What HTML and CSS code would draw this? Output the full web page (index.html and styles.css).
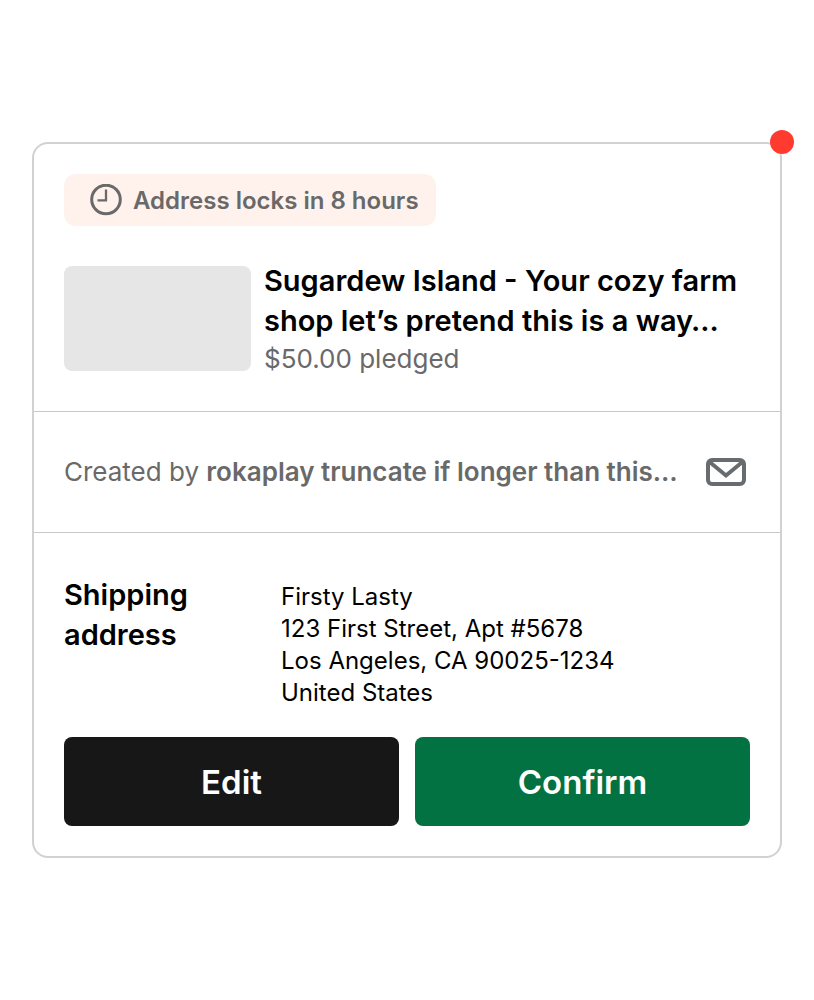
FILE: index.html
```html
<!DOCTYPE html>
<html lang="en">
<head>
<meta charset="utf-8">
<meta name="viewport" content="width=device-width, initial-scale=1">
<title>Pledge card</title>
<link rel="stylesheet" href="styles.css">
</head>
<body>
<main class="page">
  <article class="card">
    <span class="dot"></span>
    <section class="pledge">
      <div class="lock">
        <svg class="clock" viewBox="0 0 32 32" aria-hidden="true"><circle cx="16" cy="15.5" r="14.3"/><path class="hands" d="M16 5.5v10.8H7.5"/></svg>
        <span>Address locks in 8 hours</span>
      </div>
      <div class="project">
        <div class="thumb"></div>
        <div class="info">
          <h1 class="title">Sugardew Island - Your cozy farm shop let’s pretend this is a way…</h1>
          <p class="amount">$50.00 pledged</p>
        </div>
      </div>
    </section>
    <section class="creator">
      <p class="by">Created by <strong>rokaplay truncate if longer than this…</strong></p>
      <button class="mail" type="button" aria-label="Message creator">
        <svg class="envelope" viewBox="0 0 40 28" aria-hidden="true"><rect x="2" y="2" width="36" height="24" rx="4"/><path d="M3 3.5l17 14 17-14"/></svg>
      </button>
    </section>
    <section class="shipping">
      <div class="details">
        <h2 class="heading">Shipping address</h2>
        <address class="address">Firsty Lasty<br>123 First Street, Apt #5678<br>Los Angeles, CA 90025-1234<br>United States</address>
      </div>
      <div class="actions">
        <button class="button" type="button">Edit</button>
        <button class="button confirm" type="button">Confirm</button>
      </div>
    </section>
  </article>
</main>
</body>
</html>
```
FILE: styles.css
```css
* { box-sizing: border-box; }
body { margin: 0; background: #fff; color: #000; font-family: Inter, "Liberation Sans", sans-serif; }
h1, h2, p { margin: 0; }
.page { min-height: 100vh; display: flex; align-items: center; padding: 32px; }
.card { position: relative; flex: 1; min-width: 0; border: 2px solid #d1d1d1; border-radius: 16px; }
.dot { position: absolute; top: -14px; right: -14px; width: 24px; height: 24px; border-radius: 50%; background: #ff3b30; }
.pledge { padding: 30px 30px 40px; }
.lock { display: flex; width: fit-content; align-items: center; gap: 11px; height: 52px; padding: 0 17px 0 26px; border-radius: 12px; background: #fff2ec; color: #696969; font-size: 24px; font-weight: 600; white-space: nowrap; }
.clock { width: 32px; height: 32px; fill: none; stroke: #696969; stroke-width: 3; }
.hands { stroke-width: 2.3; }
.project { display: flex; gap: 13px; margin-top: 40px; align-items: flex-start; }
.thumb { flex: none; width: 187px; height: 105px; border-radius: 8px; background: #e6e6e6; }
.info { flex: 1; min-width: 0; margin: -5px 0; }
.title { font-size: 29px; line-height: 40px; font-weight: 600; }
.amount { color: #696969; font-size: 26px; line-height: 35px; }
.creator { display: flex; align-items: center; justify-content: space-between; min-height: 122px; padding: 0 34px 0 30px; border-top: 1px solid #c9c9c9; border-bottom: 1px solid #c9c9c9; color: #696969; }
.by { min-width: 0; font-size: 26px; line-height: 40px; white-space: nowrap; overflow: hidden; text-overflow: ellipsis; }
.by strong { font-weight: 600; }
.mail { flex: none; padding: 0; border: 0; background: none; display: flex; }
.envelope { width: 40px; height: 28px; fill: none; stroke: #696c6e; stroke-width: 4; }
.shipping { padding: 42px 30px 30px; }
.details { display: flex; gap: 24px; }
.heading { width: 193px; font-size: 29px; line-height: 40px; font-weight: 600; }
.address { padding-top: 6px; font-size: 24px; line-height: 32px; font-style: normal; }
.actions { display: grid; grid-template-columns: 1fr 1fr; gap: 16px; margin-top: 28px; }
.button { height: 89px; border: 0; border-radius: 8px; background: #171717; color: #fff; font: 600 33px/40px Inter, "Liberation Sans", sans-serif; }
.confirm { background: #037242; }
```
